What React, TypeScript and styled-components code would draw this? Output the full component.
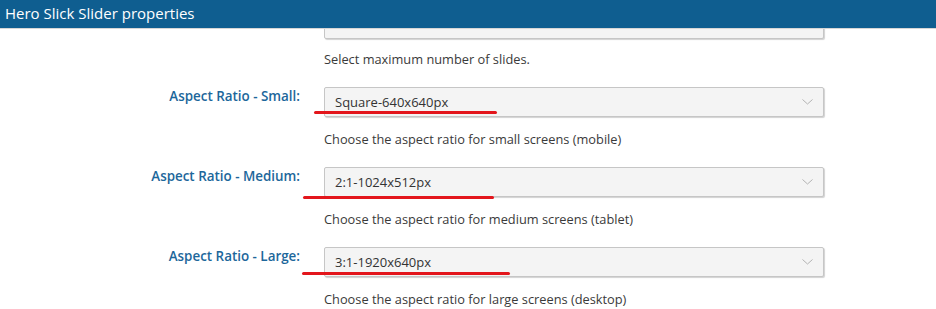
import React from 'react'
import styled, { createGlobalStyle } from 'styled-components'

const GlobalStyle = createGlobalStyle`
    html, body {
        margin: 0;
        padding: 0;
        background: #ffffff;
    }
    body {
        font-family: 'Open Sans', 'Noto Sans', sans-serif;
        color: #333;
    }
`

interface IField {
    label: string
    value: string
    help: string
    mark?: { left: number; top: number; width: number }
}

const fields: IField[] = [
    {
        label: 'Aspect Ratio - Small:',
        value: 'Square-640x640px',
        help: 'Choose the aspect ratio for small screens (mobile)',
        mark: { left: -10, top: 24, width: 183 },
    },
    {
        label: 'Aspect Ratio - Medium:',
        value: '2:1-1024x512px',
        help: 'Choose the aspect ratio for medium screens (tablet)',
        mark: { left: -21, top: 29, width: 191 },
    },
    {
        label: 'Aspect Ratio - Large:',
        value: '3:1-1920x640px',
        help: 'Choose the aspect ratio for large screens (desktop)',
        mark: { left: -22, top: 25, width: 208 },
    },
]

const Chevron = () => (
    <svg width="11" height="6" viewBox="0 0 11 6" fill="none">
        <path d="M0.5 0.5 L5.5 5 L10.5 0.5" stroke="#b3b3b3" strokeWidth="1" />
    </svg>
)

const App: React.FC = () => {
    return (
        <>
            <GlobalStyle />
            <Panel>
                <Header>Hero Slick Slider properties</Header>
                <Body>
                    <List>
                        <Row>
                            <Label />
                            <Field>
                                <Select />
                                <Help $first>Select maximum number of slides.</Help>
                            </Field>
                        </Row>
                        {fields.map((f) => (
                            <Row key={f.label}>
                                <Label>{f.label}</Label>
                                <Field>
                                    <Select>
                                        <SelectValue>{f.value}</SelectValue>
                                        <Chevron />
                                    </Select>
                                    {f.mark && <Mark $left={f.mark.left} $top={f.mark.top} $width={f.mark.width} />}
                                    <Help>{f.help}</Help>
                                </Field>
                            </Row>
                        ))}
                    </List>
                </Body>
            </Panel>
        </>
    )
}

const Panel = styled.div`
    width: 936px;
    height: 309px;
    overflow: hidden;
    display: flex;
    flex-direction: column;
    background: #fff;
`

const Header = styled.div`
    height: 28px;
    flex-shrink: 0;
    background: #0f5e90;
    color: #fff;
    font-size: 15px;
    line-height: 27px;
    padding-left: 5px;
    border-bottom: 1px solid #d6d6d6;
`

const Body = styled.div`
    flex: 1;
    overflow: hidden;
`

const List = styled.div`
    display: flex;
    flex-direction: column;
    margin-top: -20px;
`

const Row = styled.div`
    display: grid;
    grid-template-columns: 300px 500px;
    column-gap: 24px;
    align-items: start;
    padding-bottom: 19px;
`

const Label = styled.div`
    text-align: right;
    color: #1d679b;
    font-weight: 600;
    font-size: 13.4px;
    line-height: 18px;
`

const Field = styled.div`
    position: relative;
    display: flex;
    flex-direction: column;
`

const Select = styled.div`
    box-sizing: border-box;
    height: 30px;
    display: flex;
    align-items: center;
    justify-content: space-between;
    padding: 0 10px 0 10px;
    background: #f4f4f4;
    border: 1px solid #c6c6c6;
    border-radius: 2px;
    box-shadow: 1px 1px 1px rgba(0, 0, 0, 0.18);
    color: #333;
    font-size: 13px;
`

const SelectValue = styled.span`
    line-height: 18px;
`

const Help = styled.div<{ $first?: boolean }>`
    margin-top: ${(p) => (p.$first ? 11 : 13)}px;
    font-size: 12.8px;
    line-height: 18px;
    color: #3a3a3a;
`

const Mark = styled.div<{ $left: number; $top: number; $width: number }>`
    position: absolute;
    left: ${(p) => p.$left}px;
    top: ${(p) => p.$top}px;
    width: ${(p) => p.$width}px;
    height: 3px;
    border-radius: 2px;
    background: #e3161c;
`

export default App
